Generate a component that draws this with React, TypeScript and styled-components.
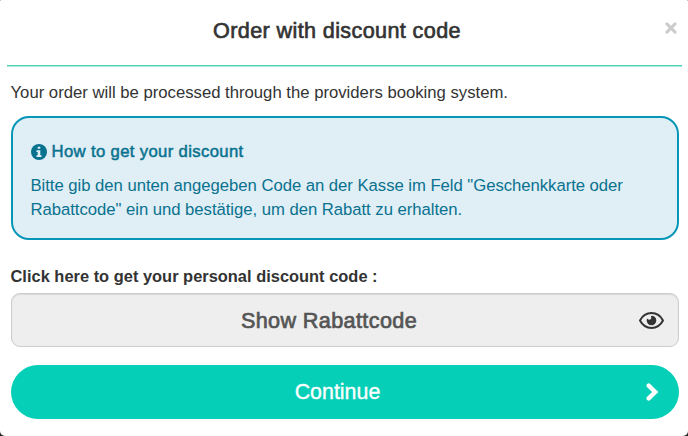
import React from "react";
import styled, { createGlobalStyle } from "styled-components";

const GlobalStyle = createGlobalStyle`
  * { box-sizing: border-box; }
  body {
    margin: 0;
    background: #222;
    overflow: hidden;
    font-family: "Liberation Sans", Arial, sans-serif;
  }
  button { font-family: inherit; cursor: pointer; }
`;

const Modal = styled.main`
  width: 688px;
  height: 436px;
  padding: 0 6px 0 7px;
  display: flex;
  flex-direction: column;
  background: #fff;
  border-radius: 1px 1px 5px 5px;
  color: #333;
`;

const Header = styled.header`
  height: 67px;
  flex: none;
  display: grid;
  grid-template-columns: 24px 1fr 24px;
  border-bottom: 1px solid #a9eadf;
  box-shadow: inset 0 -1px 0 #4fd0bb;
`;

const Title = styled.h1`
  margin: 18px 0 0 -15px;
  font-size: 21.6px;
  line-height: 26px;
  font-weight: 400;
  letter-spacing: 0.38px;
  text-align: center;
  white-space: nowrap;
  -webkit-text-stroke: 0.65px currentColor;
`;

const CloseButton = styled.button`
  width: 12px;
  height: 12px;
  margin: 22px 0 0 7px;
  padding: 0;
  display: flex;
  border: 0;
  background: none;
  color: #ccc;
`;

const Body = styled.section`
  display: flex;
  flex-direction: column;
  padding: 14px 3.5px 0 3.5px;
`;

const Intro = styled.p`
  margin: 0;
  font-size: 16.7px;
  line-height: 24px;
  white-space: nowrap;
`;

const InfoBox = styled.div`
  height: 124px;
  margin-top: 11px;
  padding: 22px 18px;
  border: 2px solid #0696b7;
  border-radius: 18px;
  background: #e0eef6;
  color: #08728f;
`;

const InfoHeading = styled.h2`
  display: flex;
  align-items: center;
  gap: 5px;
  margin: 0 0 10px;
  font-size: 16.7px;
  line-height: 24px;
  font-weight: 400;
  letter-spacing: 0.35px;
  -webkit-text-stroke: 0.5px currentColor;
  svg { -webkit-text-stroke: 0; }
`;

const InfoText = styled.p`
  margin: 0;
  font-size: 16.7px;
  line-height: 23.5px;
  letter-spacing: -0.035px;
  white-space: nowrap;
`;

const Label = styled.div`
  margin-top: 24px;
  font-size: 16.4px;
  line-height: 24px;
  font-weight: 700;
  letter-spacing: 0.02px;
  white-space: nowrap;
`;

const ActionButton = styled.button<{ $primary?: boolean }>`
  width: 100%;
  height: 54px;
  margin-top: ${({ $primary }) => ($primary ? 18 : 5)}px;
  padding: 0 ${({ $primary }) => ($primary ? 20 : 13.5)}px;
  display: grid;
  grid-template-columns: 26px 1fr 26px;
  align-items: center;
  justify-items: end;
  border: ${({ $primary }) => ($primary ? "0" : "1px solid #ccc")};
  border-radius: ${({ $primary }) => ($primary ? 27 : 9)}px;
  background: ${({ $primary }) => ($primary ? "#05d0b7" : "#eee")};
  box-shadow: ${({ $primary }) => ($primary ? "none" : "inset 0 1px 1px rgba(0,0,0,.09)")};
  color: ${({ $primary }) => ($primary ? "#fff" : "#333")};
`;

const ButtonText = styled.span<{ $muted?: boolean }>`
  grid-column: 2;
  justify-self: center;
  margin-right: ${({ $muted }) => ($muted ? 31 : 14)}px;
  padding-top: ${({ $muted }) => ($muted ? 2 : 0)}px;
  font-size: ${({ $muted }) => ($muted ? 21.6 : 21.4)}px;
  line-height: 26px;
  letter-spacing: ${({ $muted }) => ($muted ? 0.38 : 0)}px;
  color: ${({ $muted }) => ($muted ? "#555" : "#fff")};
  -webkit-text-stroke: ${({ $muted }) => ($muted ? 0.7 : 0.35)}px currentColor;
`;

const CloseIcon = () => (
  <svg width="12" height="12" viewBox="0 0 12 12" fill="none" stroke="currentColor" strokeWidth="3" strokeLinecap="round">
    <path d="M1.9 1.9 10.1 10.1M10.1 1.9 1.9 10.1" />
  </svg>
);

const InfoIcon = () => (
  <svg width="16" height="16" viewBox="0 0 16 16">
    <circle cx="8" cy="8" r="8" fill="currentColor" />
    <path d="M6.7 2.7h2.6v2.1H6.7zM5.5 6.3h3.8v4.9h1.2v1.9h-5v-1.9h1.2V8.1H5.5z" fill="#e0eef6" />
  </svg>
);

const EyeIcon = () => (
  <svg width="25" height="17" viewBox="0 0 25 17">
    <path
      d="M1 8.5C3.4 3.9 7.5 1.1 12.5 1.1S21.6 3.9 24 8.5c-2.4 4.6-6.5 7.4-11.5 7.4S3.4 13.1 1 8.5Z"
      fill="none"
      stroke="currentColor"
      strokeWidth="2"
      strokeLinejoin="round"
    />
    <path d="M12.5 3.7a4.8 4.8 0 1 1-4.8 4.8c0-.7.1-1.3.4-1.9.5.8 1.3 1.2 2.2 1.1 1.6-.1 2.5-1.6 1.8-3-.2-.4-.2-.8.4-1Z" fill="currentColor" />
  </svg>
);

const ChevronIcon = () => (
  <svg width="13" height="18" viewBox="0 0 13 18" fill="none" stroke="currentColor" strokeWidth="4.4">
    <path d="m2.7 2.6 6.5 6.4-6.5 6.4" strokeLinecap="round" />
  </svg>
);

export default function App() {
  return (
    <>
      <GlobalStyle />
      <Modal role="dialog" aria-labelledby="dialog-title">
        <Header>
          <span />
          <Title id="dialog-title">Order with discount code</Title>
          <CloseButton aria-label="Close"><CloseIcon /></CloseButton>
        </Header>
        <Body>
          <Intro>Your order will be processed through the providers booking system.</Intro>
          <InfoBox>
            <InfoHeading><InfoIcon />How to get your discount</InfoHeading>
            <InfoText>
              Bitte gib den unten angegeben Code an der Kasse im Feld "Geschenkkarte oder
              <br />
              Rabattcode" ein und bestätige, um den Rabatt zu erhalten.
            </InfoText>
          </InfoBox>
          <Label>Click here to get your personal discount code :</Label>
          <ActionButton>
            <ButtonText $muted>Show Rabattcode</ButtonText>
            <EyeIcon />
          </ActionButton>
          <ActionButton $primary>
            <ButtonText>Continue</ButtonText>
            <ChevronIcon />
          </ActionButton>
        </Body>
      </Modal>
    </>
  );
}
